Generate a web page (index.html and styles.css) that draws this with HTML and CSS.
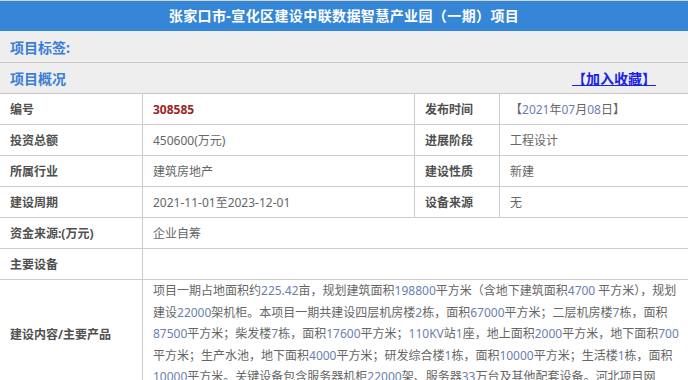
FILE: index.html
```html
<!DOCTYPE html>
<html lang="zh-CN">
<head>
<meta charset="utf-8">
<title>张家口市-宣化区建设中联数据智慧产业园（一期）项目</title>
<link rel="stylesheet" href="styles.css">
</head>
<body>
<div class="page">
  <div class="title">张家口市-宣化区建设中联数据智慧产业园（一期）项目</div>
  <div class="sec sec-first">
    <span class="sec-label">项目标签:</span>
  </div>
  <div class="sec">
    <span class="sec-label">项目概况</span>
    <a class="fav" href="#">【加入收藏】</a>
  </div>
  <div class="info">
    <div class="row">
      <div class="c c1 lab">编号</div>
      <div class="c c2"><span class="code">308585</span></div>
      <div class="c c3 lab">发布时间</div>
      <div class="c c4">【<span class="n">2021</span>年<span class="n">07</span>月<span class="n">08</span>日】</div>
    </div>
    <div class="row">
      <div class="c c1 lab">投资总额</div>
      <div class="c c2">450600(万元)</div>
      <div class="c c3 lab">进展阶段</div>
      <div class="c c4">工程设计</div>
    </div>
    <div class="row">
      <div class="c c1 lab">所属行业</div>
      <div class="c c2">建筑房地产</div>
      <div class="c c3 lab">建设性质</div>
      <div class="c c4">新建</div>
    </div>
    <div class="row">
      <div class="c c1 lab">建设周期</div>
      <div class="c c2">2021-11-01至2023-12-01</div>
      <div class="c c3 lab">设备来源</div>
      <div class="c c4">无</div>
    </div>
    <div class="row">
      <div class="c c1 lab">资金来源:(万元)</div>
      <div class="c wide">企业自筹</div>
    </div>
    <div class="row">
      <div class="c c1 lab">主要设备</div>
      <div class="c wide"></div>
    </div>
    <div class="row">
      <div class="c c1 lab">建设内容/主要产品</div>
      <div class="c wide long">项目一期占地面积约<span class="n">225.42</span>亩，规划建筑面积<span class="n">198800</span>平方米（含地下建筑面积<span class="n">4700</span> 平方米），规划<br>建设<span class="n">22000</span>架机柜。本项目一期共建设四层机房楼<span class="n">2</span>栋，面积<span class="n">67000</span>平方米；二层机房楼<span class="n">7</span>栋，面积<br><span class="n">87500</span>平方米；柴发楼<span class="n">7</span>栋，面积<span class="n">17600</span>平方米；<span class="n">110KV</span>站<span class="n">1</span>座，地上面积<span class="n">2000</span>平方米，地下面积<span class="n">700</span><br>平方米；生产水池，地下面积<span class="n">4000</span>平方米；研发综合楼<span class="n">1</span>栋，面积<span class="n">10000</span>平方米；生活楼<span class="n">1</span>栋，面积<br><span class="n">10000</span>平方米。关键设备包含服务器机柜<span class="n">22000</span>架、服务器<span class="n">33</span>万台及其他配套设备。河北项目网</div>
    </div>
  </div>
</div>
</body>
</html>
```
FILE: styles.css
```css
html, body {
  margin: 0;
  padding: 0;
  background: #fff;
}

body {
  font-family: "Noto Sans", "Noto Sans CJK SC", sans-serif;
  font-size: 12px;
  color: #666;
}

.page {
  width: 688px;
  border-top: 1px solid #d4d4d4;
}

.title {
  height: 30px;
  line-height: 30px;
  background: #3586d6;
  color: #fff;
  font-weight: bold;
  font-size: 14px;
  letter-spacing: 0.4px;
  text-align: center;
}

.sec {
  box-sizing: border-box;
  height: 31px;
  background: #eeeeee;
  border-bottom: 1px solid #c8c8c8;
  display: flex;
  align-items: center;
  justify-content: space-between;
  padding: 0 32px 0 10px;
}

.sec-first {
  height: 32px;
}

.sec-label {
  color: #3b7dd6;
  font-weight: bold;
  font-size: 14px;
}

.fav {
  color: #1b22e6;
  font-weight: bold;
  font-size: 14px;
  text-decoration: underline;
}

.row {
  display: flex;
  border-bottom: 1px solid #cccccc;
}

.c {
  box-sizing: border-box;
  min-height: 30px;
  padding: 0 10px;
  display: flex;
  align-items: center;
  border-right: 1px solid #cccccc;
}

.c1 { width: 143px; }
.c2 { width: 272px; }
.c3 { width: 85px; }
.c4 { flex: 1; border-right: 0; }
.wide { flex: 1; border-right: 0; }

.lab {
  font-weight: bold;
  color: #505050;
}

.code {
  font-weight: bold;
  color: #9e1f26;
}

.n {
  color: #6a80b0;
}

.long {
  display: block;
  white-space: nowrap;
  line-height: 21.6px;
  padding: 0 0 0 10px;
}
```
